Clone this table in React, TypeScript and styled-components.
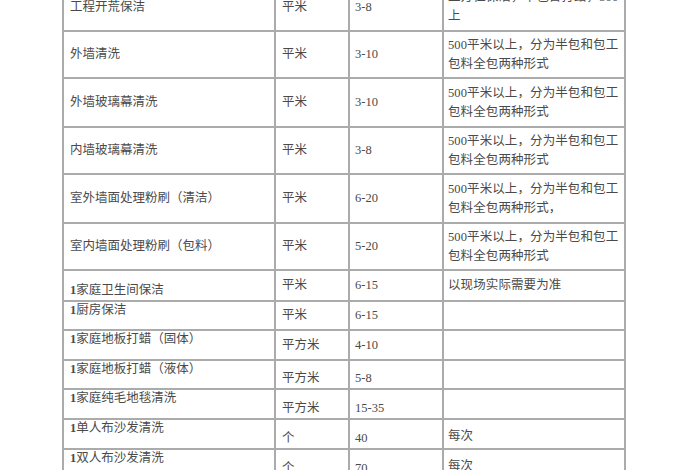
import React from 'react';
import styled, { createGlobalStyle } from 'styled-components';

type VAlign = 'top' | 'middle' | 'bottom';

interface PriceRow {
    name: string,
    unit: string,
    price: string,
    note: string[],
    height: number,
    nameAlign?: VAlign,
    align?: VAlign
};

const GlobalStyle = createGlobalStyle`
    html, body {
        margin: 0;
        padding: 0;
        background: #ffffff;
    }
`;

const Page = styled.div`
    width: 700px;
    height: 470px;
    overflow: hidden;
    background: #ffffff;
`;

const PriceTable = styled.table`
    margin: -18px 0 0 62px;
    width: 562px;
    table-layout: fixed;
    border-collapse: collapse;
    font-family: "Liberation Serif", "Noto Sans CJK SC", serif;
    font-size: 12.5px;
    color: #4a4a4a;
`;

const Col = styled.col<{ $w: number }>`
    width: ${p => p.$w}px;
`;

const Row = styled.tr<{ $h: number }>`
    height: ${p => p.$h}px;
`;

const Cell = styled.td<{ $align: VAlign, $pad: number }>`
    border: 2px solid #ababab;
    padding: ${p => p.$align === 'top' ? 1 : 0}px 2px ${p => p.$align === 'bottom' ? 2 : 0}px ${p => p.$pad}px;
    vertical-align: ${p => p.$align};
    line-height: 15px;
    white-space: nowrap;
    overflow: hidden;
`;

const Lead = styled.span`
    font-weight: bold;
`;

const NoteLine = styled.span`
    display: block;
    line-height: 19px;
    letter-spacing: 0.1px;
`;

const NOTE_A = '500平米以上，分为半包和包工';
const NOTE_B = '包料全包两种形式';

const bigRows: PriceRow[] = [
    { name: '工程开荒保洁', unit: '平米', price: '3-8', note: ['工方位保洁，半包含打蜡，500', '上'], height: 48 },
    { name: '外墙清洗', unit: '平米', price: '3-10', note: [NOTE_A, NOTE_B], height: 47 },
    { name: '外墙玻璃幕清洗', unit: '平米', price: '3-10', note: [NOTE_A, NOTE_B], height: 49 },
    { name: '内墙玻璃幕清洗', unit: '平米', price: '3-8', note: [NOTE_A, NOTE_B], height: 47 },
    { name: '室外墙面处理粉刷（清洁）', unit: '平米', price: '6-20', note: [NOTE_A, '包料全包两种形式，'], height: 49 },
    { name: '室内墙面处理粉刷（包料）', unit: '平米', price: '5-20', note: [NOTE_A, NOTE_B], height: 47 },
];

const smallRows: PriceRow[] = [
    { name: '1家庭卫生间保洁', unit: '平米', price: '6-15', note: ['以现场实际需要为准'], height: 31, nameAlign: 'bottom' },
    { name: '1厨房保洁', unit: '平米', price: '6-15', note: [], height: 29, nameAlign: 'top' },
    { name: '1家庭地板打蜡（固体）', unit: '平方米', price: '4-10', note: [], height: 30, nameAlign: 'top' },
    { name: '1家庭地板打蜡（液体）', unit: '平方米', price: '5-8', note: [], height: 29, nameAlign: 'top', align: 'bottom' },
    { name: '1家庭纯毛地毯清洗', unit: '平方米', price: '15-35', note: [], height: 30, nameAlign: 'top', align: 'bottom' },
    { name: '1单人布沙发清洗', unit: '个', price: '40', note: ['每次'], height: 30, nameAlign: 'top', align: 'bottom' },
    { name: '1双人布沙发清洗', unit: '个', price: '70', note: ['每次'], height: 30, nameAlign: 'top', align: 'bottom' },
];

// 以“1”开头的项目名，数字加粗显示
const renderName = (name: string) => {
    if (name.startsWith('1')) {
        return <><Lead>1</Lead>{name.slice(1)}</>;
    }
    return name;
};

const renderRow = (row: PriceRow, i: number) => {
    const align = row.align ?? 'middle';
    const nameAlign = row.nameAlign ?? 'middle';

    return (
        <Row key={i} $h={row.height}>
            <Cell $align={nameAlign} $pad={6}>{renderName(row.name)}</Cell>
            <Cell $align={align} $pad={6}>{row.unit}</Cell>
            <Cell $align={align} $pad={5}>{row.price}</Cell>
            <Cell $align={align} $pad={4}>
                {row.note.map((line, j) => <NoteLine key={j}>{line}</NoteLine>)}
            </Cell>
        </Row>
    );
};

const App: React.FC = () => {
    return (
        <Page>
            <GlobalStyle />
            <PriceTable>
                <colgroup>
                    <Col $w={212} />
                    <Col $w={74} />
                    <Col $w={94} />
                    <Col $w={182} />
                </colgroup>
                <tbody>
                    {bigRows.map(renderRow)}
                    {smallRows.map((r, i) => renderRow(r, i + bigRows.length))}
                </tbody>
            </PriceTable>
        </Page>
    );
};

export default App;
